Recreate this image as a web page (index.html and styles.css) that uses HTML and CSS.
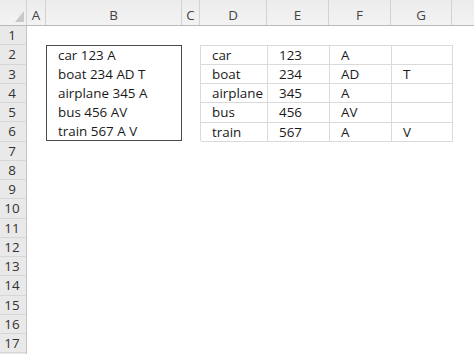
FILE: index.html
```html
<!DOCTYPE html>
<html>
<head>
<meta charset="utf-8">
<link rel="stylesheet" href="styles.css">
</head>
<body>
<div class="sheet">
  <div class="colheads">
    <div class="corner"><span class="tri"></span></div>
    <div class="ch w-a">A</div>
    <div class="ch w-b">B</div>
    <div class="ch w-c">C</div>
    <div class="ch w-d">D</div>
    <div class="ch w-e">E</div>
    <div class="ch w-f">F</div>
    <div class="ch w-g">G</div>
    <div class="ch w-rest"></div>
  </div>
  <div class="body">
    <div class="rowheads">
      <div class="rh">1</div><div class="rh">2</div><div class="rh">3</div><div class="rh">4</div>
      <div class="rh">5</div><div class="rh">6</div><div class="rh">7</div><div class="rh">8</div>
      <div class="rh">9</div><div class="rh">10</div><div class="rh">11</div><div class="rh">12</div>
      <div class="rh">13</div><div class="rh">14</div><div class="rh">15</div><div class="rh">16</div>
      <div class="rh">17</div>
    </div>
    <div class="canvas">
      <div class="box">
        <div class="line">car 123 A</div>
        <div class="line">boat 234 AD T</div>
        <div class="line">airplane 345 A</div>
        <div class="line">bus 456 AV</div>
        <div class="line">train 567 A V</div>
      </div>
      <div class="table">
        <div class="cell">car</div><div class="cell">123</div><div class="cell">A</div><div class="cell"></div>
        <div class="cell">boat</div><div class="cell">234</div><div class="cell">AD</div><div class="cell">T</div>
        <div class="cell">airplane</div><div class="cell">345</div><div class="cell">A</div><div class="cell"></div>
        <div class="cell">bus</div><div class="cell">456</div><div class="cell">AV</div><div class="cell"></div>
        <div class="cell">train</div><div class="cell">567</div><div class="cell">A</div><div class="cell">V</div>
      </div>
    </div>
  </div>
</div>
</body>
</html>
```

FILE: styles.css
```css
* { box-sizing: border-box; }
html, body { margin: 0; padding: 0; background: #fff; }
body {
  font-family: "Open Sans", "Liberation Sans", sans-serif;
  font-size: 13.4px;
  color: #1a1a1a;
  width: 474px;
  height: 354px;
  overflow: hidden;
}
.sheet { display: flex; flex-direction: column; }
.colheads {
  display: flex;
  height: 26px;
  background: linear-gradient(#ececec, #f3f3f3);
  border-bottom: 1px solid #b9b9b9;
}
.corner {
  width: 27px;
  position: relative;
  border-right: 1px solid #d2d2d2;
}
.tri {
  position: absolute;
  right: 2px;
  bottom: 3px;
  width: 0;
  height: 0;
  border-style: solid;
  border-width: 0 0 11px 9px;
  border-color: transparent transparent #c9c9c9 transparent;
}
.ch {
  border-right: 1px solid #d2d2d2;
  color: #444;
  text-align: center;
  padding-top: 6px;
  line-height: 18px;
}
.w-a { width: 19px; }
.w-b { width: 136px; }
.w-c { width: 18px; }
.w-d { width: 67px; }
.w-e { width: 62px; }
.w-f { width: 62px; }
.w-g { width: 61px; }
.w-rest { flex: 1; border-right: none; }
.body { display: flex; }
.rowheads {
  width: 27px;
  background: #e9e9e9;
  border-right: 1px solid #c4c4c4;
  display: flex;
  flex-direction: column;
}
.rh {
  height: 19.25px;
  border-bottom: 1px solid #d6d6d6;
  color: #333;
  text-align: center;
  line-height: 19px;
  padding-right: 2px;
}
.canvas {
  flex: 1;
  display: grid;
  grid-template-columns: 19px 136px 18px 252px 1fr;
  grid-template-rows: 18.5px repeat(5, 19.25px) 1fr;
  height: 330px;
}
.box {
  grid-column: 2;
  grid-row: 2 / 7;
  border: 1px solid #4a4a4a;
  display: flex;
  flex-direction: column;
  padding-left: 11px;
}
.line {
  height: 19.25px;
  line-height: 19px;
  white-space: nowrap;
}
.table {
  grid-column: 4;
  grid-row: 2 / 7;
  display: grid;
  grid-template-columns: 67px 62px 62px 61px;
  grid-template-rows: repeat(5, 19.25px);
  border-top: 1px solid #dadada;
  border-left: 1px solid #dadada;
  margin-right: -1px;
}
.cell {
  border-right: 1px solid #dadada;
  border-bottom: 1px solid #dadada;
  padding-left: 11px;
  line-height: 18px;
  white-space: nowrap;
}
```
